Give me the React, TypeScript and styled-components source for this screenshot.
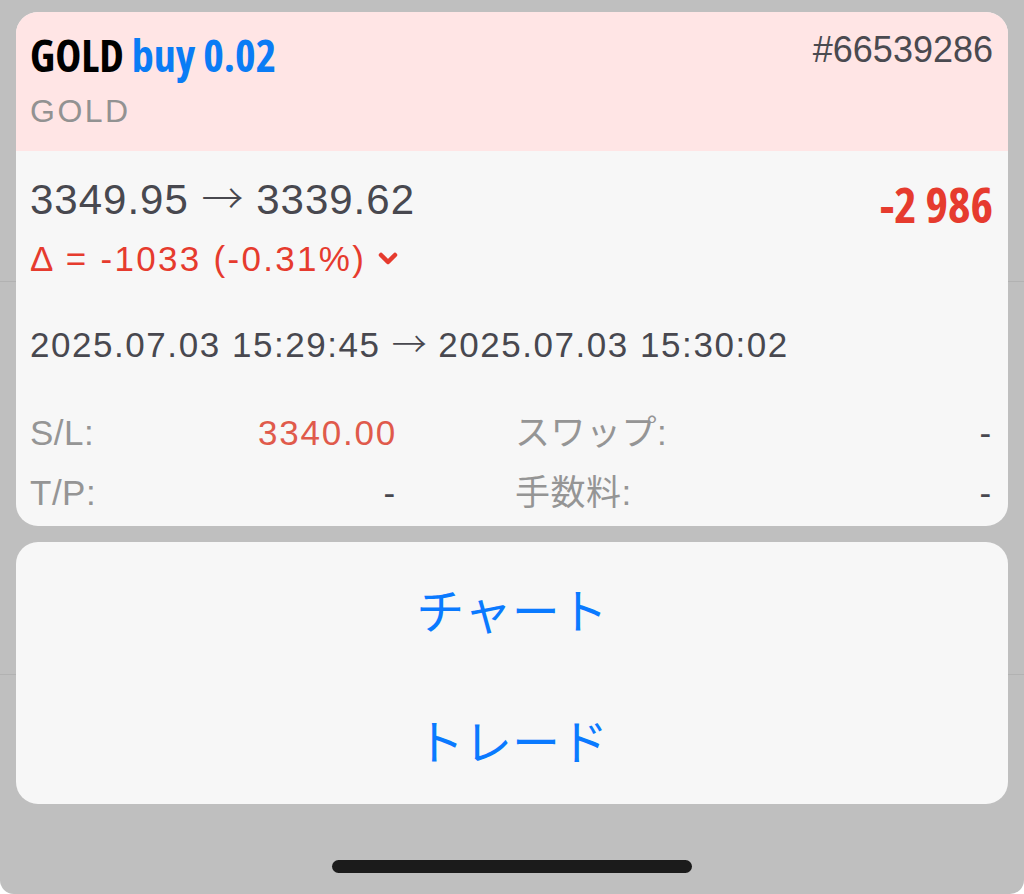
import React from 'react';
import styled, { createGlobalStyle } from 'styled-components';

const GlobalStyle = createGlobalStyle`
  html, body {
    margin: 0;
    padding: 0;
    background: #ffffff;
  }
  * {
    box-sizing: border-box;
  }
`;

const sans = `"Liberation Sans", Arial, "Noto Sans CJK JP", sans-serif`;
const narrow = `"Open Sans", Roboto, sans-serif`;
const jp = `"Liberation Sans", "Noto Sans CJK JP", sans-serif`;

const Screen = styled.div`
  width: 1024px;
  height: 894px;
  padding: 12px 16px 0;
  display: flex;
  flex-direction: column;
  align-items: stretch;
  border-radius: 0 0 14px 14px;
  background:
    linear-gradient(to bottom, transparent 281px, #b2b2b2 281px, #b2b2b2 282px, transparent 282px),
    linear-gradient(to bottom, transparent 674px, #b2b2b2 674px, #b2b2b2 675px, transparent 675px),
    #bfbfbf;
`;

const Card = styled.div`
  border-radius: 22px;
  overflow: hidden;
  background: #f7f7f7;
`;

const Header = styled.div`
  height: 139px;
  padding: 17px 15px 0 14px;
  background: #ffe5e5;
`;

const TitleRow = styled.div`
  display: flex;
  justify-content: space-between;
  align-items: flex-start;
`;

const Title = styled.div`
  font-family: ${narrow};
  font-stretch: 76%;
  font-weight: 700;
  font-size: 44px;
  line-height: 52px;
  color: #000000;
  white-space: nowrap;
`;

const Side = styled.span`
  color: #0a7cf5;
`;

const Ticket = styled.div`
  font-family: ${sans};
  font-size: 36px;
  line-height: 41.5px;
  color: #4a4a50;
`;

const Symbol = styled.div`
  margin-top: 10px;
  font-family: ${sans};
  font-size: 32px;
  line-height: 40px;
  letter-spacing: 2.5px;
  color: #929292;
`;

const Body = styled.div`
  padding: 24px 15px 3px 14px;
`;

const PriceRow = styled.div`
  display: flex;
  justify-content: space-between;
  align-items: flex-start;
`;

const Prices = styled.div`
  font-family: ${sans};
  font-size: 42px;
  line-height: 50px;
  letter-spacing: 1px;
  color: #48484f;
`;

const Arrow = styled.span<{ $size: number }>`
  font-family: "Noto Sans CJK JP", sans-serif;
  font-weight: 300;
  font-size: ${p => p.$size}px;
  line-height: 0;
  letter-spacing: 0;
`;

const Profit = styled.div`
  font-family: ${narrow};
  font-stretch: 77%;
  font-weight: 700;
  font-size: 48px;
  line-height: 60px;
  color: #e63b2e;
  white-space: nowrap;
`;

const Delta = styled.div`
  margin-top: 2px;
  display: flex;
  align-items: center;
  gap: 12px;
  font-family: ${sans};
  font-size: 35px;
  line-height: 44px;
  letter-spacing: 2.3px;
  color: #e63b2e;
`;

const Times = styled.div`
  margin-top: 42px;
  font-family: ${sans};
  font-size: 35px;
  line-height: 44px;
  letter-spacing: 1.55px;
  color: #48484f;
`;

const Stats = styled.div`
  margin-top: 36px;
  display: grid;
  grid-template-columns: 367px 1fr;
  column-gap: 118px;
`;

const Stat = styled.div`
  display: flex;
  justify-content: space-between;
  font-family: ${jp};
  font-size: 35px;
  line-height: 60px;
`;

const StatLabel = styled.span`
  color: #959595;
  letter-spacing: 0.5px;
`;

const StatValue = styled.span<{ $tone?: 'red' | 'plain' }>`
  color: ${p => (p.$tone === 'red' ? '#e05a4b' : '#48484f')};
  letter-spacing: 1.8px;
`;

const Actions = styled.div`
  margin-top: 16px;
  border-radius: 22px;
  background: #f7f7f7;
  display: flex;
  flex-direction: column;
`;

const Action = styled.button`
  height: 131px;
  border: none;
  background: transparent;
  padding: 0;
  font-family: ${jp};
  font-size: 48px;
  font-weight: 400;
  color: #0a7aff;
  cursor: pointer;
`;

const HomeBar = styled.div`
  align-self: center;
  width: 360px;
  height: 13px;
  margin-top: 56px;
  border-radius: 7px;
  background: #1b1b1b;
`;

const Chevron = () => (
  <svg width="20" height="14" viewBox="0 0 20 14">
    <path d="M3 3 L10 10 L17 3" fill="none" stroke="#e63b2e" strokeWidth="4.5" strokeLinecap="round" strokeLinejoin="round" />
  </svg>
);

const stats = [
  { label: 'S/L:', value: '3340.00', tone: 'red' as const },
  { label: 'スワップ:', value: '-' },
  { label: 'T/P:', value: '-' },
  { label: '手数料:', value: '-' },
];

export default function App() {
  return (
    <>
      <GlobalStyle />
      <Screen>
        <Card>
          <Header>
            <TitleRow>
              <Title>
                GOLD <Side>buy 0.02</Side>
              </Title>
              <Ticket>#66539286</Ticket>
            </TitleRow>
            <Symbol>GOLD</Symbol>
          </Header>
          <Body>
            <PriceRow>
              <Prices>
                3349.95 <Arrow $size={42}>→</Arrow> 3339.62
              </Prices>
              <Profit>-2 986</Profit>
            </PriceRow>
            <Delta>
              <span>Δ = -1033 (-0.31%)</span>
              <Chevron />
            </Delta>
            <Times>
              2025.07.03 15:29:45 <Arrow $size={35}>→</Arrow> 2025.07.03 15:30:02
            </Times>
            <Stats>
              {stats.map(s => (
                <Stat key={s.label}>
                  <StatLabel>{s.label}</StatLabel>
                  <StatValue $tone={s.tone ?? 'plain'}>{s.value}</StatValue>
                </Stat>
              ))}
            </Stats>
          </Body>
        </Card>
        <Actions>
          <Action>チャート</Action>
          <Action>トレード</Action>
        </Actions>
        <HomeBar />
      </Screen>
    </>
  );
}
